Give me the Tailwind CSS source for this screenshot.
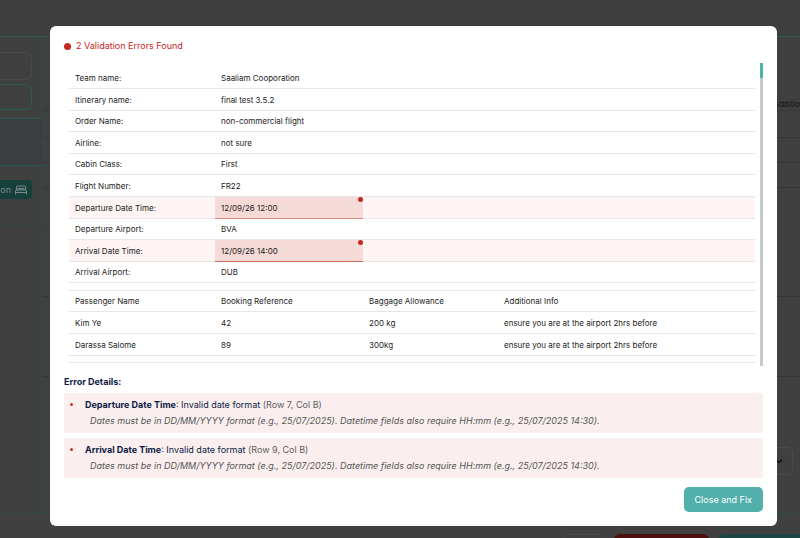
<!DOCTYPE html>
<html lang="en">
<head>
<meta charset="utf-8">
<meta name="viewport" content="width=device-width, initial-scale=1">
<title>Validation errors</title>
<script src="https://cdn.jsdelivr.net/npm/@tailwindcss/browser@4"></script>
</head>
<body class="h-screen overflow-hidden bg-[#404040] font-[Inter,sans-serif]">

<!-- Dimmed page behind the dialog -->
<div class="flex h-full flex-col" aria-hidden="true">
  <header class="h-[37px] shrink-0 border-b border-[#2a5a56] bg-[#3e3e3e]"></header>
  <div class="flex flex-1">
    <aside class="w-[43px] shrink-0 border-r border-[#2a4c4a]">
      <div class="flex h-[82px] flex-col gap-1 border-b border-[#2a5a56] pt-[15px] pr-[10px]">
        <div class="h-7 shrink-0 rounded-r-md border border-l-0 border-[#4a4a4a]"></div>
        <div class="h-[26px] shrink-0 rounded-r-md border border-l-0 border-[#2a5a56]"></div>
      </div>
      <div class="h-[47px] border-b border-[#2a5a56] bg-[#3b3d3f]"></div>
      <div class="flex h-[61px] items-start border-b border-[#2f4341] pt-[14px] pr-[10px]">
        <div class="flex h-[19px] w-full items-center justify-end gap-1 rounded-r-sm bg-[#16403c] pr-[5px] text-[9px] text-[#7b8988]">
          <span>on</span>
          <svg class="h-3 w-3" viewBox="0 0 12 12" fill="none" stroke="currentColor" stroke-width="1"><path d="M1.500 6V3a1 1 0 0 1 1-1h7a1 1 0 0 1 1 1v3M.5 10.500V7a1 1 0 0 1 1-1h9a1 1 0 0 1 1 1v3.500M.5 8.500h11M3 6V4.500h6V6M6 4.500V6"/></svg>
        </div>
      </div>
    </aside>
    <main class="flex flex-1 flex-col text-[8px] text-[#101014]">
      <div class="flex h-[74px] items-end justify-end border-b border-[#373737] leading-3"><span>Additio</span></div>
      <div class="h-[27px] border-b border-[#373737]"></div>
      <div class="h-[25px] border-b border-[#373737]"></div>
      <div class="h-[25px] border-b border-[#373737]"></div>
      <div class="h-[109px] border-b border-[#373737]"></div>
      <div class="h-20 border-b border-[#373737]"></div>
      <div class="flex justify-end pt-[70px] pr-[7px]">
        <div class="flex h-7 w-20 items-center justify-end rounded-md border border-[#4a4a4a] pr-[9px]">
          <svg class="size-2" viewBox="0 0 8 8" fill="none" stroke="#0c0c0c" stroke-width="1.500"><path d="M1 2.500 4 5.500 7 2.500"/></svg>
        </div>
      </div>
    </main>
  </div>
  <footer class="flex h-[25px] shrink-0 items-start justify-end gap-[10px] overflow-hidden border-t border-[#2a4c4a] pt-5">
    <div class="h-[26px] w-[41px] shrink-0 rounded-md border border-[#4a4a4a]"></div>
    <div class="h-[26px] w-[95px] shrink-0 rounded-md bg-[#4d0f0b]"></div>
    <div class="h-[26px] w-[81px] shrink-0 rounded-l-md bg-[#1d4543]"></div>
  </footer>
</div>

<!-- Dialog -->
<div class="fixed inset-0 flex items-start pt-[26px] pr-[23px] pl-[50px]">
  <section role="dialog" aria-modal="true" aria-labelledby="dialog-title" class="flex w-full flex-col rounded-md bg-white px-[14px] pt-[13px] pb-[14px]">
    <h1 id="dialog-title" class="flex h-[14px] items-center gap-[5px] text-[9px] text-[#c5281c]"><span class="size-[7px] rounded-full bg-[#c5281c]"></span>2 Validation Errors Found</h1>

    <div class="mt-[10px] flex justify-between gap-[5px]">
      <div class="flex-1 pt-1 pb-[3px] pl-[5px]">
        <table class="w-full table-fixed border-separate border-spacing-0 text-left text-[8px] leading-[10px] text-[#1c1c1c] [&_td]:border-b [&_td]:border-[#e6e6e6] [&_td]:p-0 [&_td]:pl-[6px]">
          <colgroup><col class="w-[146px]"><col class="w-[148px]"><col class="w-[135px]"><col></colgroup>
          <tbody>
            <tr class="h-[22px]"><td>Team name:</td><td>Saaliam Cooporation</td><td></td><td></td></tr>
            <tr class="h-[22px]"><td>Itinerary name:</td><td>final test 3.5.2</td><td></td><td></td></tr>
            <tr class="h-[21px]"><td>Order Name:</td><td>non-commercial flight</td><td></td><td></td></tr>
            <tr class="h-[22px]"><td>Airline:</td><td>not sure</td><td></td><td></td></tr>
            <tr class="h-[21px]"><td>Cabin Class:</td><td>First</td><td></td><td></td></tr>
            <tr class="h-[22px]"><td>Flight Number:</td><td>FR22</td><td></td><td></td></tr>
            <tr class="h-[22px] bg-[#fdf4f3]"><td>Departure Date Time:</td><td class="relative border-[#dc8a80]! bg-[#f5dad7]">12/09/26 12:00<span class="absolute top-0 right-0 size-[5px] rounded-full bg-[#c5281c]"></span></td><td></td><td></td></tr>
            <tr class="h-[21px]"><td>Departure Airport:</td><td>BVA</td><td></td><td></td></tr>
            <tr class="h-[22px] bg-[#fdf4f3]"><td>Arrival Date Time:</td><td class="relative border-[#d0675c]! bg-[#f5dad7]">12/09/26 14:00<span class="absolute top-0 right-0 size-[5px] rounded-full bg-[#c5281c]"></span></td><td></td><td></td></tr>
            <tr class="h-[21px]"><td>Arrival Airport:</td><td>DUB</td><td></td><td></td></tr>
            <tr class="h-[8px]"><td colspan="4"></td></tr>
            <tr class="h-[21px]"><td>Passenger Name</td><td>Booking Reference</td><td>Baggage Allowance</td><td>Additional Info</td></tr>
            <tr class="h-[22px]"><td>Kim Ye</td><td>42</td><td>200 kg</td><td>ensure you are at the airport 2hrs before</td></tr>
            <tr class="h-[22px]"><td>Darassa Salome</td><td>89</td><td>300kg</td><td>ensure you are at the airport 2hrs before</td></tr>
            <tr class="h-[7px]"><td colspan="4"></td></tr>
          </tbody>
        </table>
      </div>
      <!-- Scroll track and thumb -->
      <div class="w-[3px] bg-[#c6c9cd]"><div class="h-[15px] bg-[#4db3a9]"></div></div>
    </div>

    <h2 class="mt-2 text-[9px] leading-4 font-bold text-[#0d1b45]">Error Details:</h2>
    <ul class="mt-[3px] flex flex-col gap-[5px] text-[9px] leading-4 text-[#0d1b45]">
      <li class="flex items-start rounded-xs bg-[#faefee] px-[6px] py-1">
        <span class="mt-[6px] mr-3 size-[3px] shrink-0 rounded-full bg-[#d0281c]"></span>
        <div><p><b>Departure Date Time</b>: Invalid date format <span class="text-[#5c5c5c]">(Row 7, Col B)</span></p>
        <p class="pl-[5px] text-[#555] italic">Dates must be in DD/MM/YYYY format (e.g., 25/07/2025). Datetime fields also require HH:mm (e.g., 25/07/2025 14:30).</p></div>
      </li>
      <li class="flex items-start rounded-xs bg-[#faefee] px-[6px] py-1">
        <span class="mt-[6px] mr-3 size-[3px] shrink-0 rounded-full bg-[#d0281c]"></span>
        <div><p><b>Arrival Date Time</b>: Invalid date format <span class="text-[#5c5c5c]">(Row 9, Col B)</span></p>
        <p class="pl-[5px] text-[#555] italic">Dates must be in DD/MM/YYYY format (e.g., 25/07/2025). Datetime fields also require HH:mm (e.g., 25/07/2025 14:30).</p></div>
      </li>
    </ul>

    <button type="button" class="mt-[9px] h-[25px] self-end rounded-[5px] bg-[#52afaa] px-[11px] text-[9px] text-white">Close and Fix</button>
  </section>
</div>
</body>
</html>
